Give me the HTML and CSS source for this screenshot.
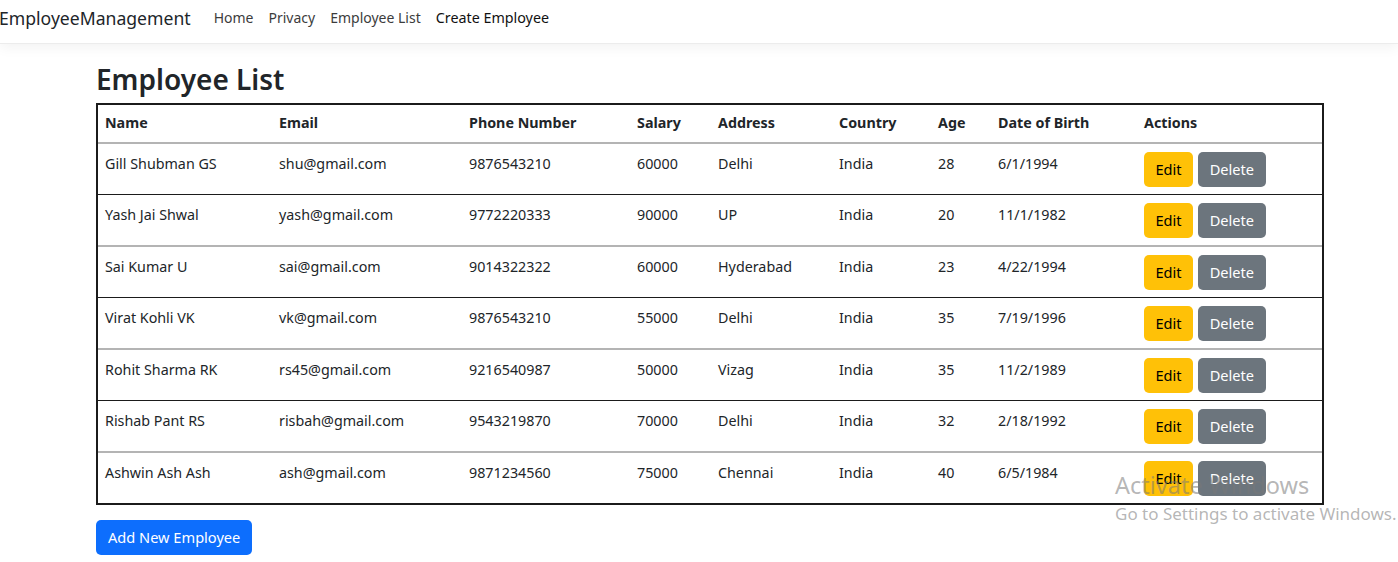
FILE: index.html
```html
<!DOCTYPE html>
<html lang="en">
<head>
<meta charset="utf-8">
<title>Employee List - EmployeeManagement</title>
<link rel="stylesheet" href="styles.css">
</head>
<body>
<header class="navbar">
  <a class="brand" href="#">EmployeeManagement</a>
  <nav class="nav">
    <a class="nav-link" href="#">Home</a>
    <a class="nav-link" href="#">Privacy</a>
    <a class="nav-link" href="#">Employee List</a>
    <a class="nav-link nav-link-dark" href="#">Create Employee</a>
  </nav>
</header>
<main class="container">
  <h1 class="title">Employee List</h1>
  <table class="emp-table">
    <thead>
      <tr>
        <th class="c-name">Name</th>
        <th class="c-email">Email</th>
        <th class="c-phone">Phone Number</th>
        <th class="c-salary">Salary</th>
        <th class="c-addr">Address</th>
        <th class="c-country">Country</th>
        <th class="c-age">Age</th>
        <th class="c-dob">Date of Birth</th>
        <th class="c-act">Actions</th>
      </tr>
    </thead>
    <tbody>
      <tr><td>Gill Shubman GS</td><td>shu@gmail.com</td><td>9876543210</td><td>60000</td><td>Delhi</td><td>India</td><td>28</td><td>6/1/1994</td><td><a class="btn btn-warning" href="#">Edit</a><a class="btn btn-secondary" href="#">Delete</a></td></tr>
      <tr><td>Yash Jai Shwal</td><td>yash@gmail.com</td><td>9772220333</td><td>90000</td><td>UP</td><td>India</td><td>20</td><td>11/1/1982</td><td><a class="btn btn-warning" href="#">Edit</a><a class="btn btn-secondary" href="#">Delete</a></td></tr>
      <tr><td>Sai Kumar U</td><td>sai@gmail.com</td><td>9014322322</td><td>60000</td><td>Hyderabad</td><td>India</td><td>23</td><td>4/22/1994</td><td><a class="btn btn-warning" href="#">Edit</a><a class="btn btn-secondary" href="#">Delete</a></td></tr>
      <tr><td>Virat Kohli VK</td><td>vk@gmail.com</td><td>9876543210</td><td>55000</td><td>Delhi</td><td>India</td><td>35</td><td>7/19/1996</td><td><a class="btn btn-warning" href="#">Edit</a><a class="btn btn-secondary" href="#">Delete</a></td></tr>
      <tr><td>Rohit Sharma RK</td><td>rs45@gmail.com</td><td>9216540987</td><td>50000</td><td>Vizag</td><td>India</td><td>35</td><td>11/2/1989</td><td><a class="btn btn-warning" href="#">Edit</a><a class="btn btn-secondary" href="#">Delete</a></td></tr>
      <tr><td>Rishab Pant RS</td><td>risbah@gmail.com</td><td>9543219870</td><td>70000</td><td>Delhi</td><td>India</td><td>32</td><td>2/18/1992</td><td><a class="btn btn-warning" href="#">Edit</a><a class="btn btn-secondary" href="#">Delete</a></td></tr>
      <tr><td>Ashwin Ash Ash</td><td>ash@gmail.com</td><td>9871234560</td><td>75000</td><td>Chennai</td><td>India</td><td>40</td><td>6/5/1984</td><td><a class="btn btn-warning" href="#">Edit</a><a class="btn btn-secondary" href="#">Delete</a></td></tr>
    </tbody>
  </table>
  <a class="btn btn-primary" href="#">Add New Employee</a>
</main>
<div class="activate">
  <div class="activate-title">Activate Windows</div>
  <div class="activate-sub">Go to Settings to activate Windows.</div>
</div>
</body>
</html>
```

FILE: styles.css
```css
* { box-sizing: border-box; }
html, body { margin: 0; padding: 0; }
body {
  font-family: "Noto Sans", "Open Sans", sans-serif;
  font-size: 14.3px;
  line-height: 24px;
  color: #212529;
  background: #fff;
  overflow: hidden;
}
a { text-decoration: none; }

.navbar {
  height: 44px;
  display: flex;
  align-items: flex-start;
  padding-top: 5px;
  border-bottom: 1px solid #ececec;
  box-shadow: 0 4px 12px rgba(0, 0, 0, 0.05);
}
.brand {
  font-size: 17.6px;
  line-height: 26px;
  color: #212529;
  margin-left: -1px;
  margin-right: 23px;
}
.nav { display: flex; padding-top: 1px; }
.nav-link {
  font-size: 14px;
  line-height: 24px;
  color: #3c3c3c;
  margin-right: 15px;
}
.nav-link-dark { color: #111; font-size: 14.3px; }

.container {
  padding: 0 74px 0 96px;
}
.title {
  font-size: 28px;
  font-weight: 600;
  line-height: 36px;
  margin: 17px 0 6px;
}

.emp-table {
  width: 1228px;
  border-collapse: separate;
  border-spacing: 0;
  border: 2px solid #1b1b1b;
  table-layout: fixed;
  margin-bottom: 15px;
}
.emp-table th, .emp-table td {
  text-align: left;
  vertical-align: top;
  white-space: nowrap;
}
.emp-table th {
  font-weight: 700;
  padding: 6px 8px 7px 7px;
  border-bottom: 2px solid #b4b4b4;
}
.emp-table td { padding: 8px 8px 7px 7px; }
.emp-table tbody tr:nth-child(odd) td { border-bottom: 1px solid #1b1b1b; }
.emp-table tbody tr:nth-child(even) td { border-bottom: 2px solid #b4b4b4; }
.emp-table tbody tr:last-child td { border-bottom: none; }

.c-name { width: 174px; }
.c-email { width: 190px; }
.c-phone { width: 168px; }
.c-salary { width: 81px; }
.c-addr { width: 121px; }
.c-country { width: 99px; }
.c-age { width: 60px; }
.c-dob { width: 146px; }
.c-act { width: auto; }

.btn {
  display: inline-block;
  height: 35px;
  padding: 0 11.5px;
  font-size: 14.6px;
  line-height: 35px;
  border-radius: 5px;
  vertical-align: top;
}
.btn-warning { background: #ffc107; color: #000; }
.btn-secondary { background: #6c757d; color: #fff; margin-left: 5px; }
.btn-primary { background: #0d6efd; color: #fff; padding: 0 12px; }

.activate {
  position: absolute;
  left: 1115px;
  top: 470px;
  color: rgba(120, 120, 120, 0.55);
  pointer-events: none;
}
.activate-title { font-size: 23.5px; line-height: 30px; }
.activate-sub { font-size: 17px; line-height: 28px; }
```
